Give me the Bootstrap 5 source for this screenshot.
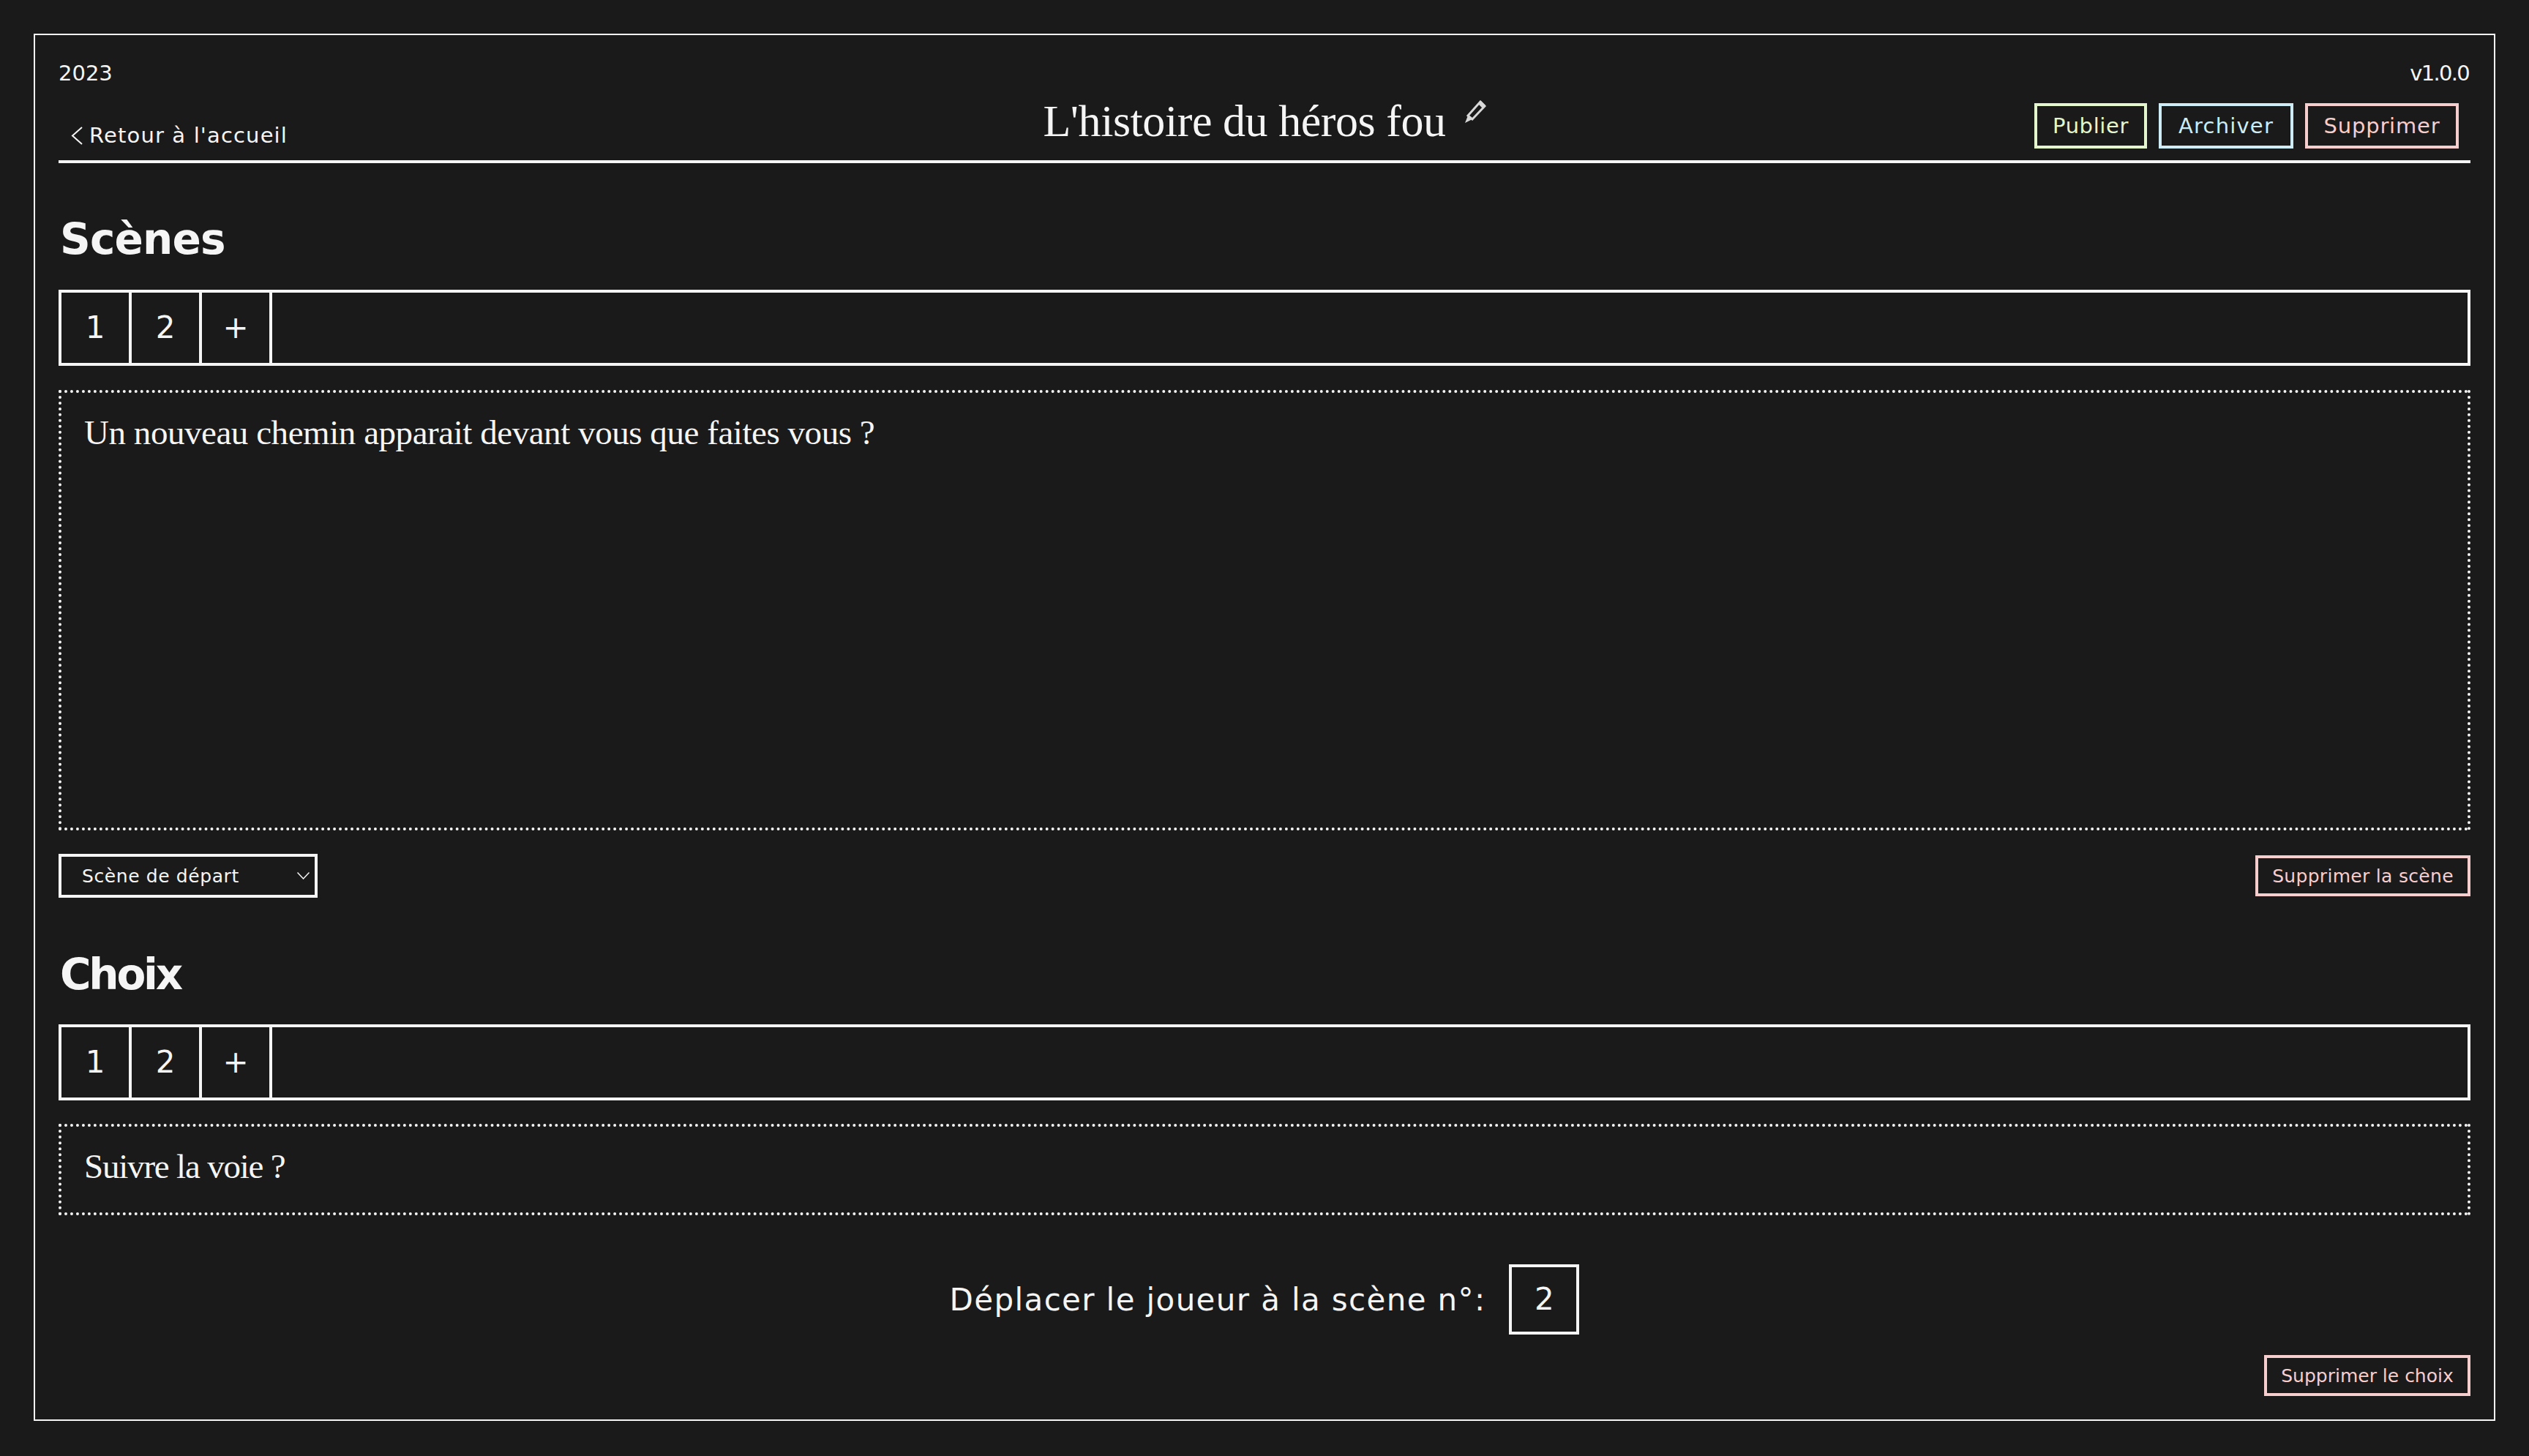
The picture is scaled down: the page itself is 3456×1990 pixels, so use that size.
<!DOCTYPE html>
<html lang="fr">
<head>
    <meta charset="UTF-8">
    <meta name="viewport" content="width=device-width, initial-scale=1.0">
    <title>L'histoire du héros fou</title>
    <link href="https://cdn.jsdelivr.net/npm/bootstrap@5.3.0/dist/css/bootstrap.min.css" rel="stylesheet">
    <style>
        body {
            background-color: #1a1a1a;
            color: #f5f5f5;
            font-family: "DejaVu Sans", sans-serif;
            padding: 46px;
        }

        .frame {
            border: 2px solid #f5f5f5;
            padding: 35px 32px 32px;
        }

        .meta-line {
            height: 34px;
            font-size: 29px;
            line-height: 34px;
        }

        .meta-version { letter-spacing: -1.7px; padding-right: 2px; }

        .head-line {
            display: grid;
            grid-template-columns: 1fr auto 1fr;
            align-items: end;
            height: 106px;
            border-bottom: 4px solid #f5f5f5;
        }

        .back-link {
            color: #f5f5f5;
            text-decoration: none;
            font-size: 29px;
            line-height: 34px;
            letter-spacing: 1.15px;
            padding: 0 0 17px 17px;
        }

        .back-link svg { margin-right: 9px; vertical-align: -3px; }

        .story-title {
            font-family: "Liberation Serif", serif;
            font-size: 62px;
            line-height: 72px;
            font-weight: 400;
            letter-spacing: -.45px;
            margin: 0 0 18px;
        }

        .story-title svg { margin-left: 24px; vertical-align: 17px; }

        .btn-ink {
            --bs-btn-color: var(--ink);
            --bs-btn-border-color: var(--ink);
            --bs-btn-border-width: 4px;
            --bs-btn-border-radius: 0;
            --bs-btn-bg: transparent;
            --bs-btn-hover-color: var(--ink);
            --bs-btn-hover-bg: transparent;
            --bs-btn-hover-border-color: var(--ink);
            font-size: 29px;
            line-height: 34px;
            height: 62px;
            padding: 10px 0;
        }

        .ink-green { --ink: #e3f6ce; width: 154px; letter-spacing: .6px; }
        .ink-blue { --ink: #ceecf5; width: 184px; letter-spacing: 1.2px; }
        .ink-pink { --ink: #f6cece; width: 210px; letter-spacing: .8px; }

        .btn-small {
            font-size: 25px;
            line-height: 26px;
            height: 56px;
            padding: 12px 0 10px;
        }

        .btn-scene { width: 294px; letter-spacing: .3px; }
        .btn-choice { width: 282px; letter-spacing: 0; }

        .section-title {
            font-size: 58px;
            line-height: 56px;
            font-weight: 700;
            margin: 0;
            padding-left: 2px;
        }

        .title-scenes { margin-top: 76px; margin-bottom: 41px; letter-spacing: -.8px; }
        .title-choices { margin-top: 77px; margin-bottom: 40px; letter-spacing: -3.2px; }

        .tab-strip { border: 4px solid #f5f5f5; }

        .tab-cell {
            width: 96px;
            height: 96px;
            border-right: 4px solid #f5f5f5;
            font-size: 42px;
            line-height: 96px;
            text-align: center;
        }

        .story-box {
            border: 4px dotted #f5f5f5;
            font-family: "Liberation Serif", serif;
            font-size: 47px;
            line-height: 61px;
            padding: 24px 31px;
        }

        .box-scene { height: 602px; margin-top: 33px; letter-spacing: -.45px; }
        .box-choice { height: 125px; margin-top: 32px; letter-spacing: -1.2px; }

        .scene-tools { margin-top: 32px; height: 60px; }

        .form-select.start-scene {
            width: 354px;
            height: 60px;
            background-color: transparent;
            color: #f5f5f5;
            border: 4px solid #f5f5f5;
            border-radius: 0;
            font-size: 25px;
            letter-spacing: .6px;
            padding: 2px 40px 0 28px;
            background-image: url("data:image/svg+xml,%3csvg xmlns='http://www.w3.org/2000/svg' viewBox='0 0 17 10'%3e%3cpath fill='none' stroke='%23f5f5f5' stroke-width='1.5' d='M.5.5l8 8.5 8-8.5'/%3e%3c/svg%3e");
            background-position: right 7px center;
            background-size: 17px 10px;
        }

        .move-line { margin-top: 67px; gap: 32px; }

        .move-label {
            font-size: 42px;
            letter-spacing: 1.36px;
        }

        .move-box {
            width: 96px;
            height: 96px;
            border: 4px solid #f5f5f5;
            font-size: 42px;
            line-height: 88px;
            text-align: center;
        }

        .choice-tools { margin-top: 28px; }
    </style>
</head>

<body>
    <div class="frame">
        <div class="meta-line d-flex justify-content-between">
            <span>2023</span>
            <span class="meta-version">v1.0.0</span>
        </div>

        <div class="head-line">
            <div>
                <a class="back-link d-inline-block" href="#"><svg width="16" height="25" viewBox="0 0 16 25"><path d="M15 1L2 12.5 15 24" fill="none" stroke="#f5f5f5" stroke-width="2"/></svg>Retour à l'accueil</a>
            </div>
            <h1 class="story-title">L'histoire du héros fou<svg width="31" height="32" viewBox="0 0 31 32"><path d="M23 2l6 6-17 18-6-5z" fill="none" stroke="#d8d8d8" stroke-width="3"/><path d="M24 1l6 6-4 4-6-6z" fill="#d8d8d8"/><path d="M6 21l6 5-10 5z" fill="#d8d8d8"/></svg></h1>
            <div class="d-flex justify-content-end gap-3 pe-3 pb-3">
                <button class="btn btn-ink ink-green" type="button">Publier</button>
                <button class="btn btn-ink ink-blue" type="button">Archiver</button>
                <button class="btn btn-ink ink-pink" type="button">Supprimer</button>
            </div>
        </div>

        <h2 class="section-title title-scenes">Scènes</h2>
        <div class="tab-strip d-flex">
            <div class="tab-cell">1</div>
            <div class="tab-cell">2</div>
            <div class="tab-cell">+</div>
        </div>
        <div class="story-box box-scene">Un nouveau chemin apparait devant vous que faites vous ?</div>
        <div class="scene-tools d-flex justify-content-between align-items-center">
            <select class="form-select start-scene">
                <option>Scène de départ</option>
            </select>
            <button class="btn btn-ink ink-pink btn-small btn-scene" type="button">Supprimer la scène</button>
        </div>

        <h2 class="section-title title-choices">Choix</h2>
        <div class="tab-strip d-flex">
            <div class="tab-cell">1</div>
            <div class="tab-cell">2</div>
            <div class="tab-cell">+</div>
        </div>
        <div class="story-box box-choice">Suivre la voie ?</div>

        <div class="move-line d-flex justify-content-center align-items-center">
            <span class="move-label">Déplacer le joueur à la scène n°:</span>
            <div class="move-box">2</div>
        </div>
        <div class="choice-tools d-flex justify-content-end">
            <button class="btn btn-ink ink-pink btn-small btn-choice" type="button">Supprimer le choix</button>
        </div>
    </div>

    <script src="https://cdn.jsdelivr.net/npm/bootstrap@5.3.0/dist/js/bootstrap.bundle.min.js"></script>
</body>
</html>
